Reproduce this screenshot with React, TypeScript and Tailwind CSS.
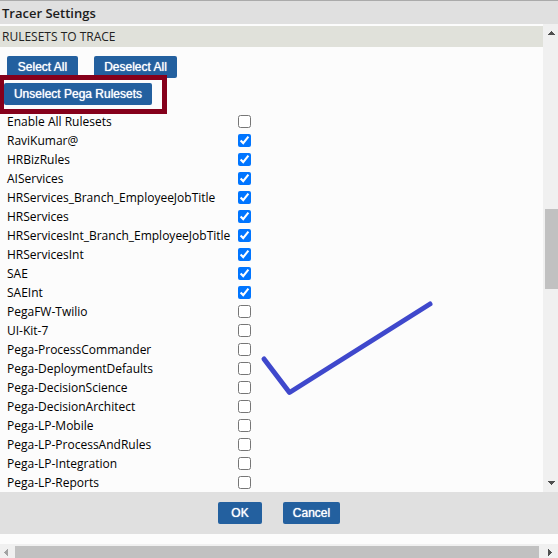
import React from "react";

const rulesets: { name: string; traced: boolean }[] = [
  { name: "Enable All Rulesets", traced: false },
  { name: "RaviKumar@", traced: true },
  { name: "HRBizRules", traced: true },
  { name: "AIServices", traced: true },
  { name: "HRServices_Branch_EmployeeJobTitle", traced: true },
  { name: "HRServices", traced: true },
  { name: "HRServicesInt_Branch_EmployeeJobTitle", traced: true },
  { name: "HRServicesInt", traced: true },
  { name: "SAE", traced: true },
  { name: "SAEInt", traced: true },
  { name: "PegaFW-Twilio", traced: false },
  { name: "UI-Kit-7", traced: false },
  { name: "Pega-ProcessCommander", traced: false },
  { name: "Pega-DeploymentDefaults", traced: false },
  { name: "Pega-DecisionScience", traced: false },
  { name: "Pega-DecisionArchitect", traced: false },
  { name: "Pega-LP-Mobile", traced: false },
  { name: "Pega-LP-ProcessAndRules", traced: false },
  { name: "Pega-LP-Integration", traced: false },
  { name: "Pega-LP-Reports", traced: false },
];

function Button({ children, className = "" }: { children: React.ReactNode; className?: string }) {
  return (
    <button
      type="button"
      className={`h-[22px] whitespace-nowrap rounded-xs bg-[#23609f] px-2 text-center font-['Liberation_Sans',sans-serif] text-[12px] leading-[20px] font-medium text-white [text-shadow:0_0_1px_#ffffff] ${className}`}
    >
      {children}
    </button>
  );
}

function VerticalScrollbar() {
  return (
    <div aria-hidden="true" className="flex w-[15px] shrink-0 flex-col items-end bg-[#f0f0f0]">
      <svg className="h-[185px] w-[13px]" viewBox="0 0 13 185" shapeRendering="crispEdges">
        <path d="M3 11v-1h1v-1h1v-1h1v-1h1v1h1v1h1v1h1v1z" fill="#505050" />
      </svg>
      <div className="h-20 w-[13px] bg-[#c1c1c1]" />
      <svg className="mt-auto h-[15px] w-[13px]" viewBox="0 0 13 15" shapeRendering="crispEdges">
        <path d="M3 4h7v1h-1v1h-1v1h-1v1h-1v-1h-1v-1h-1v-1h-1z" fill="#505050" />
      </svg>
    </div>
  );
}

function HorizontalScrollbar() {
  return (
    <div aria-hidden="true" className="flex h-[14px] items-end bg-[#f0f0f0]">
      <svg className="h-3 w-[15px] shrink-0" viewBox="0 0 15 12" shapeRendering="crispEdges">
        <path d="M8 3v7h-1v-1h-1v-1h-1v-1h-1v-1h1v-1h1v-1h1v-1z" fill="#a3a3a3" />
      </svg>
      <div className="h-3 flex-1 bg-[#c1c1c1]" />
      <svg className="h-3 w-[19px] shrink-0" viewBox="0 0 19 12" shapeRendering="crispEdges">
        <path d="M9 3h1v1h1v1h1v1h1v1h-1v1h-1v1h-1v1h-1z" fill="#505050" />
      </svg>
    </div>
  );
}

export default function App() {
  return (
    <div className="flex min-h-screen flex-col bg-[#fcfcfc] font-['Open_Sans',sans-serif] text-[12px] text-black">
      <header className="h-6 border-t border-[#aaaaaa] bg-[#e0e0e0] px-0.5">
        <h1 className="text-[13px] leading-[24px] font-semibold text-[#1c1c1c]">Tracer Settings</h1>
      </header>

      <div className="flex flex-1">
        <main className="relative min-w-0 flex-1 pt-0.5">
          <h2 className="h-[21px] bg-[#e0e1da] px-0.5 leading-[21px] text-[#222222]">RULESETS TO TRACE</h2>

          <div className="flex gap-4 px-[7px] pt-[9px]">
            <Button className="w-[71px]">Select All</Button>
            <Button className="w-[83px]">Deselect All</Button>
          </div>
          <div className="flex px-1 pt-[5px] pb-[7px]">
            <Button className="w-[148px]">Unselect Pega Rulesets</Button>
          </div>

          <ul>
            {rulesets.map((ruleset) => (
              <li key={ruleset.name} className="flex h-[19px] items-center pl-[7px]">
                <label htmlFor={ruleset.name} className="w-[231px] whitespace-nowrap leading-[19px]">
                  {ruleset.name}
                </label>
                <input id={ruleset.name} type="checkbox" defaultChecked={ruleset.traced} className="size-[13px]" />
              </li>
            ))}
          </ul>

          {/* Hand-drawn annotations over the list */}
          <div className="pointer-events-none absolute top-[51px] left-0 h-[39px] w-[167px] border-[5px] border-l-4 border-[#85001b]" />
          <svg
            aria-hidden="true"
            className="pointer-events-none absolute top-[276px] left-[260px] h-[96px] w-[174px]"
            viewBox="0 0 174 96"
            fill="none"
          >
            <path
              d="M4 59L29.500 92.500L170 4"
              stroke="#3f48cc"
              strokeWidth="5"
              strokeLinecap="round"
              strokeLinejoin="round"
            />
          </svg>
        </main>
        <VerticalScrollbar />
      </div>

      <footer className="flex h-[42px] items-center gap-[21px] bg-[#e0e0e0] pl-[218px]">
        <Button className="w-11">OK</Button>
        <Button className="w-[57px]">Cancel</Button>
      </footer>
      <div className="h-2.5" />
      <HorizontalScrollbar />
    </div>
  );
}
